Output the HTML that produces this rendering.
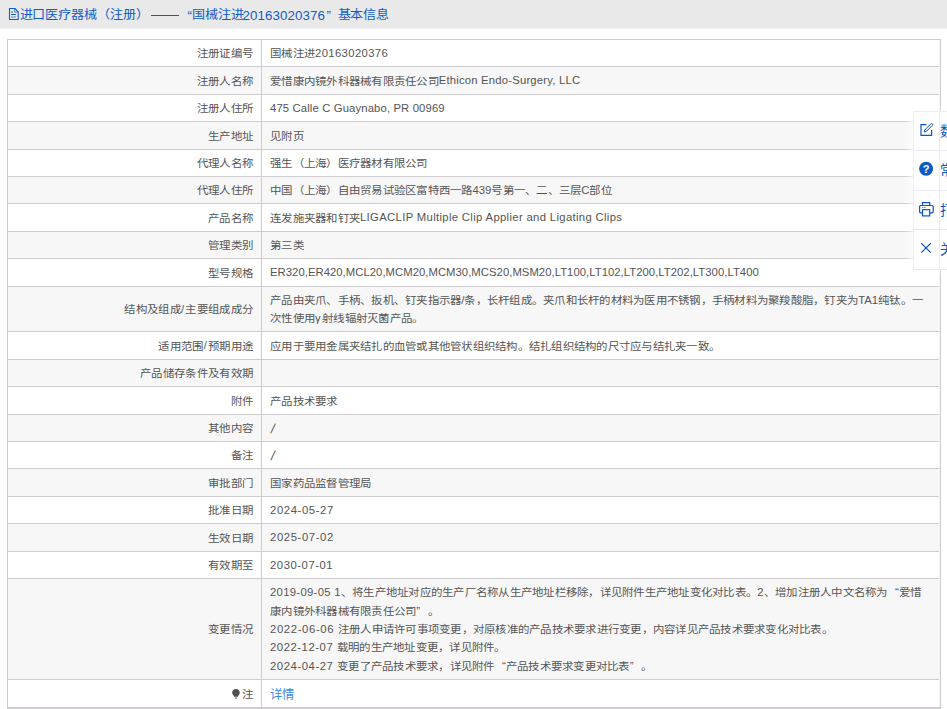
<!DOCTYPE html>
<html lang="zh-CN"><head><meta charset="utf-8"><style>
html,body{margin:0;padding:0;width:947px;height:709px;overflow:hidden;background:#fff;position:relative;font-family:"Liberation Sans",sans-serif}
.hdr{position:absolute;left:0;top:0;width:947px;height:28px;background:#e9e9e9}
.t{position:absolute;top:6.5px;line-height:18px;color:#0f5cc8;white-space:nowrap}
.c1{font-size:13.1px;letter-spacing:-0.1px;transform:scaleY(0.93);transform-origin:50% 10%}
.l1{font-size:13.3px}
.dash{position:absolute;top:14.6px;height:1.2px;background:#0f5cc8}
.doc{position:absolute;left:8px;top:7px;width:12px;height:14px}
.row{position:absolute;left:8px;width:931px}
.hl{position:absolute;left:7px;width:932px;height:1px;background:#cecbce}
.vl{position:absolute;top:39px;width:1px;background:#cecbce}
.lab{position:absolute;right:693.7px;line-height:18.33px;color:#555;white-space:nowrap;text-align:right}
.val{position:absolute;left:270px;line-height:18.33px;color:#555;white-space:nowrap}
.c{font-size:11.45px;letter-spacing:0.25px;display:inline-block;transform:scaleY(0.9);transform-origin:50% 80%}
.l{font-size:11.3px;position:relative;top:-0.2px}
.ql,.qr{display:inline-block;width:11.25px;font-size:11.5px}
.ql{text-align:right}
.qr{text-align:left}
.lab .c{letter-spacing:0.35px}
.lab .l{letter-spacing:1px}
.link{color:#3b8de6}
.link .c{font-size:12.4px;letter-spacing:-0.5px;transform:none;position:relative;top:1.2px}
.pin{display:inline-block;width:7px;height:7px;background:#555;border-radius:50% 50% 50% 0;transform:rotate(-45deg);margin-right:2px}
.panel{position:absolute;left:913px;top:111px;width:60px;height:157px;background:#fff;border:1px solid #eceef5;box-shadow:-3px 0 8px 0 rgba(255,255,255,0.85)}
.pdiv{position:absolute;left:914px;width:33px;height:1px;background:#e8eaf4}
.ptxt{position:absolute;left:939.5px;font-size:13.5px;line-height:18px;color:#0a56c4;white-space:nowrap}
</style></head><body>
<div class="hdr"></div>
<div style="position:absolute;left:0;top:28px;width:947px;height:1px;background:#f1f2f7"></div>
<svg class="doc" viewBox="0 0 12 14"><path d="M1.5 1.5H6.9L10.2 4.8V12.5H1.5Z" fill="none" stroke="#0f5cc8" stroke-width="1.1" stroke-linejoin="round"/><path d="M6.6 1.6V5H10.1" fill="none" stroke="#0f5cc8" stroke-width="0.9" opacity="0.8"/><path d="M3.2 5.1H5 M3 7.5H7.9" stroke="#0f5cc8" stroke-width="1"/><path d="M3 10H7.9" stroke="#0f5cc8" stroke-width="1.5" opacity="0.45"/></svg>
<div class="t c1" style="left:19.5px">进口医疗器械（注册）</div>
<div class="dash" style="left:151.3px;width:28.2px"></div>
<div class="t l1" style="left:187.5px">“</div>
<div class="t c1" style="left:192px">国械注进</div>
<div class="t l1" style="left:242.5px;letter-spacing:0.1px">20163020376</div>
<div class="t l1" style="left:326.5px">”</div>
<div class="t c1" style="left:337.5px">基本信息</div>
<div class="row" style="top:40px;height:26px;background:#fff"></div>
<div class="lab" style="top:43.04px"><span class="c">注册证编号</span></div>
<div class="val" id="r0_0" style="top:43.04px"><span class="c">国械注进</span><span class="l" style="letter-spacing:0.364px">20163020376</span></div>
<div class="row" style="top:67px;height:27px;background:#f7f7f7"></div>
<div class="lab" style="top:70.54px"><span class="c">注册人名称</span></div>
<div class="val" id="r1_0" style="top:70.54px"><span class="c">爱惜康内镜外科器械有限责任公司</span><span class="l" style="letter-spacing:0.192px">Ethicon Endo-Surgery, LLC</span></div>
<div class="row" style="top:95px;height:26px;background:#fff"></div>
<div class="lab" style="top:98.04px"><span class="c">注册人住所</span></div>
<div class="val" id="r2_0" style="top:98.04px"><span class="l" style="letter-spacing:0.130px">475 Calle C Guaynabo, PR 00969</span></div>
<div class="row" style="top:122px;height:27px;background:#f7f7f7"></div>
<div class="lab" style="top:125.54px"><span class="c">生产地址</span></div>
<div class="val" id="r3_0" style="top:125.54px"><span class="c">见附页</span></div>
<div class="row" style="top:150px;height:26px;background:#fff"></div>
<div class="lab" style="top:153.03px"><span class="c">代理人名称</span></div>
<div class="val" id="r4_0" style="top:153.03px"><span class="c">强生（上海）医疗器材有限公司</span></div>
<div class="row" style="top:177px;height:26px;background:#f7f7f7"></div>
<div class="lab" style="top:180.03px"><span class="c">代理人住所</span></div>
<div class="val" id="r5_0" style="top:180.03px"><span class="c">中国（上海）自由贸易试验区富特西一路</span><span class="l" style="letter-spacing:-0.025px">439</span><span class="c">号第一、二、三层</span><span class="l" style="letter-spacing:-0.025px">C</span><span class="c">部位</span></div>
<div class="row" style="top:204px;height:27px;background:#fff"></div>
<div class="lab" style="top:207.53px"><span class="c">产品名称</span></div>
<div class="val" id="r6_0" style="top:207.53px"><span class="c">连发施夹器和钉夹</span><span class="l" style="letter-spacing:0.334px">LIGACLIP Multiple Clip Applier and Ligating Clips</span></div>
<div class="row" style="top:232px;height:26px;background:#f7f7f7"></div>
<div class="lab" style="top:235.03px"><span class="c">管理类别</span></div>
<div class="val" id="r7_0" style="top:235.03px"><span class="c">第三类</span></div>
<div class="row" style="top:259px;height:27px;background:#fff"></div>
<div class="lab" style="top:262.53px"><span class="c">型号规格</span></div>
<div class="val" id="r8_0" style="top:262.53px"><span class="l" style="letter-spacing:0.036px">ER320,ER420,MCL20,MCM20,MCM30,MCS20,MSM20,LT100,LT102,LT200,LT202,LT300,LT400</span></div>
<div class="row" style="top:287px;height:44px;background:#f7f7f7"></div>
<div class="lab" style="top:299.03px"><span class="c">结构及组成</span><span class="l">/</span><span class="c">主要组成成分</span></div>
<div class="val" id="r9_0" style="top:289.87px"><span class="c">产品由夹爪、手柄、扳机、钉夹指示器</span><span class="l" style="letter-spacing:-0.000px">/</span><span class="c">条，长杆组成。夹爪和长杆的材料为医用不锈钢，手柄材料为聚羧酸脂，钉夹为</span><span class="l" style="letter-spacing:-0.000px">TA1</span><span class="c">纯钛。一</span></div>
<div class="val" id="r9_1" style="top:308.20px"><span class="c">次性使用</span><span class="l" style="letter-spacing:1.400px">γ</span><span class="c">射线辐射灭菌产品。</span></div>
<div class="row" style="top:332px;height:27px;background:#fff"></div>
<div class="lab" style="top:335.53px"><span class="c">适用范围</span><span class="l">/</span><span class="c">预期用途</span></div>
<div class="val" id="r10_0" style="top:335.53px"><span class="c">应用于要用金属夹结扎的血管或其他管状组织结构。结扎组织结构的尺寸应与结扎夹一致。</span></div>
<div class="row" style="top:360px;height:26px;background:#f7f7f7"></div>
<div class="lab" style="top:363.03px"><span class="c">产品储存条件及有效期</span></div>
<div class="val" id="r11_0" style="top:363.03px"></div>
<div class="row" style="top:387px;height:27px;background:#fff"></div>
<div class="lab" style="top:390.53px"><span class="c">附件</span></div>
<div class="val" id="r12_0" style="top:390.53px"><span class="c">产品技术要求</span></div>
<div class="row" style="top:415px;height:26px;background:#f7f7f7"></div>
<div class="lab" style="top:418.03px"><span class="c">其他内容</span></div>
<div class="val" id="r13_0" style="top:418.03px"><span class="l" style="font-size:13px;top:0.8px;margin-left:1px;display:inline-block;transform:skewX(-12deg)">/</span></div>
<div class="row" style="top:442px;height:26px;background:#fff"></div>
<div class="lab" style="top:445.03px"><span class="c">备注</span></div>
<div class="val" id="r14_0" style="top:445.03px"><span class="l" style="font-size:13px;top:0.8px;margin-left:1px;display:inline-block;transform:skewX(-12deg)">/</span></div>
<div class="row" style="top:469px;height:27px;background:#f7f7f7"></div>
<div class="lab" style="top:472.53px"><span class="c">审批部门</span></div>
<div class="val" id="r15_0" style="top:472.53px"><span class="c">国家药品监督管理局</span></div>
<div class="row" style="top:497px;height:26px;background:#fff"></div>
<div class="lab" style="top:500.03px"><span class="c">批准日期</span></div>
<div class="val" id="r16_0" style="top:500.03px"><span class="l" style="letter-spacing:0.600px">2024-05-27</span></div>
<div class="row" style="top:524px;height:27px;background:#f7f7f7"></div>
<div class="lab" style="top:527.54px"><span class="c">生效日期</span></div>
<div class="val" id="r17_0" style="top:527.54px"><span class="l" style="letter-spacing:0.600px">2025-07-02</span></div>
<div class="row" style="top:552px;height:26px;background:#fff"></div>
<div class="lab" style="top:555.04px"><span class="c">有效期至</span></div>
<div class="val" id="r18_0" style="top:555.04px"><span class="l" style="letter-spacing:0.540px">2030-07-01</span></div>
<div class="row" style="top:579px;height:100px;background:#f7f7f7"></div>
<div class="lab" style="top:619.04px"><span class="c">变更情况</span></div>
<div class="val" id="r19_0" style="top:582.38px"><span class="l" style="letter-spacing:0.307px">2019-09-05 1</span><span class="c">、将生产地址对应的生产厂名称从生产地址栏移除，详见附件生产地址变化对比表。</span><span class="l" style="letter-spacing:0.307px">2</span><span class="c">、增加注册人中文名称为</span><span class="ql">“</span><span class="c">爱惜</span></div>
<div class="val" id="r19_1" style="top:600.71px"><span class="c">康内镜外科器械有限责任公司</span><span class="qr">”</span><span class="c">。</span></div>
<div class="val" id="r19_2" style="top:619.03px"><span class="l" style="letter-spacing:0.636px">2022-06-06 </span><span class="c">注册人申请许可事项变更，对原核准的产品技术要求进行变更，内容详见产品技术要求变化对比表。</span></div>
<div class="val" id="r19_3" style="top:637.37px"><span class="l" style="letter-spacing:0.545px">2022-12-07 </span><span class="c">载明的生产地址变更，详见附件。</span></div>
<div class="val" id="r19_4" style="top:655.69px"><span class="l" style="letter-spacing:0.564px">2024-04-27 </span><span class="c">变更了产品技术要求，详见附件</span><span class="ql">“</span><span class="c">产品技术要求变更对比表</span><span class="qr">”</span><span class="c">。</span></div>
<div class="row" style="top:680px;height:27px;background:#fff"></div>
<div class="lab" style="top:683.54px"><span class="c">注</span></div>
<div class="val link" style="top:683.54px"><span class="c">详情</span></div>
<div class="hl" style="top:39px;width:934px"></div>
<div class="hl" style="top:66px"></div>
<div class="hl" style="top:94px"></div>
<div class="hl" style="top:121px"></div>
<div class="hl" style="top:149px"></div>
<div class="hl" style="top:176px"></div>
<div class="hl" style="top:203px"></div>
<div class="hl" style="top:231px"></div>
<div class="hl" style="top:258px"></div>
<div class="hl" style="top:286px"></div>
<div class="hl" style="top:331px"></div>
<div class="hl" style="top:359px"></div>
<div class="hl" style="top:386px"></div>
<div class="hl" style="top:414px"></div>
<div class="hl" style="top:441px"></div>
<div class="hl" style="top:468px"></div>
<div class="hl" style="top:496px"></div>
<div class="hl" style="top:523px"></div>
<div class="hl" style="top:551px"></div>
<div class="hl" style="top:578px"></div>
<div class="hl" style="top:679px"></div>
<div style="position:absolute;left:939px;top:40px;width:1px;height:667px;background:#f6f6fb"></div>
<div class="vl" style="left:7px;height:668px"></div>
<div class="vl" style="left:261px;height:668px"></div>
<div class="vl" style="left:940px;height:668px"></div>
<div style="position:absolute;left:7px;top:707px;width:934px;height:2px;background:#cecbce"></div>
<div class="panel"></div>
<div style="position:absolute;left:939px;top:112px;width:1px;height:157px;background:#e9eaf4"></div>
<div class="pdiv" style="top:150px"></div>
<div class="pdiv" style="top:190px"></div>
<div class="pdiv" style="top:229px"></div>
<svg style="position:absolute;left:915px;top:118px" width="24" height="145" viewBox="0 0 24 145">
<g fill="none" stroke="#0a56c4" stroke-width="1.2">
<path d="M11.5 6.7H6V17.3H16.6V12"/>
<path d="M9.2 14.0L9.7 12.0L15.9 5.8A1.05 1.05 0 0 1 17.4 7.3L11.2 13.5Z" stroke-width="1"/>
<path d="M7.5 87.5V84.6H14.7V87.5"/>
<rect x="4.6" y="87.5" width="13.6" height="7.3" rx="1"/>
<rect x="7.5" y="91.7" width="7.2" height="6.2" fill="#fff"/>
<path d="M6.3 125.3L15.8 134.6M15.8 125.3L6.3 134.6"/>
</g>
<circle cx="11.1" cy="50.8" r="7" fill="#0b5cc6"/>
<text x="11.1" y="55.3" font-family="Liberation Sans" font-weight="bold" font-size="11" fill="#fff" text-anchor="middle">?</text>
<circle cx="7.8" cy="89.5" r="0.6" fill="#0b5cc6"/><circle cx="9.9" cy="89.5" r="0.6" fill="#0b5cc6"/>
</svg>
<div class="ptxt" style="top:122.7px">数据纠错</div>
<div class="ptxt" style="top:162.2px">常见问题</div>
<div class="ptxt" style="top:202.2px">打印</div>
<div class="ptxt" style="top:241.2px">关闭</div>
<svg style="position:absolute;left:231px;top:688px" width="10" height="12" viewBox="0 0 10 12"><path d="M5 0.9C7.2 0.9 8.8 2.5 8.8 4.6C8.8 6.2 7.8 7 6.8 8.7H3.3C2.2 7 1.1 6.2 1.1 4.6C1.1 2.5 2.8 0.9 5 0.9Z" fill="#505050"/><rect x="3.9" y="8.9" width="2.2" height="2" fill="#aaa"/></svg>
</body></html>
